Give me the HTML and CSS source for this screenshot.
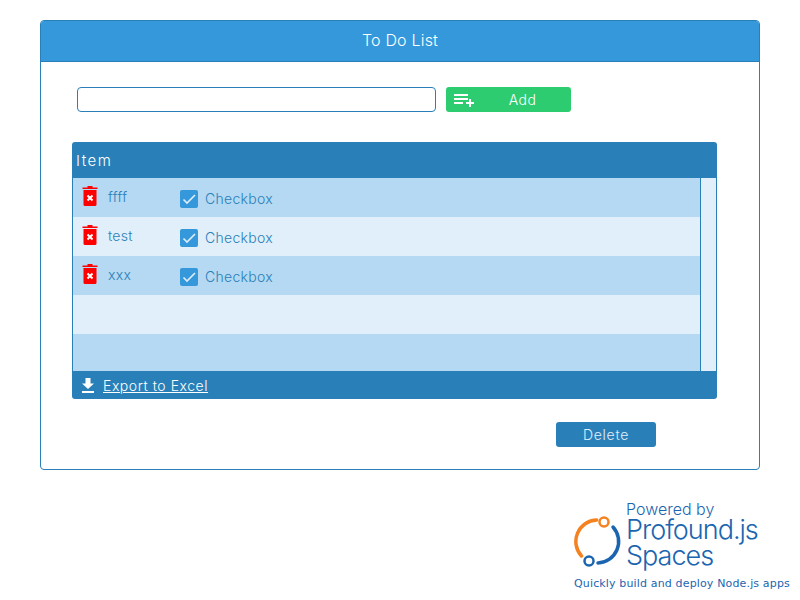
FILE: index.html
```html
<!DOCTYPE html>
<html lang="en">
<head>
<meta charset="utf-8">
<title>To Do List</title>
<link rel="stylesheet" href="styles.css">
</head>
<body>
<main class="panel">
  <header class="panel-head">To Do List</header>
  <div class="add-row">
    <input class="add-input" type="text" aria-label="New item">
    <button class="add-btn" type="button">
      <svg class="add-icon" width="20" height="14" viewBox="0 0 20 14"><path d="M0 1h14v2H0zM0 5h14v2H0zM0 9h9v2H0zM15 6h2v3h3v2h-3v3h-2v-3h-3V9h3z" fill="#fff"/></svg>
      <span class="add-label">Add</span>
    </button>
  </div>
  <section class="grid">
    <div class="grid-head">Item</div>
    <div class="grid-body">
      <div class="rows">
        <div class="row dark">
          <svg class="trash" width="16" height="20" viewBox="0 0 16 20"><path d="M5.500 1.500V0h5v1.500H15.500V3H.5V1.500z" fill="#f00"/><path d="M1.500 4h13v14.500a1.500 1.500 0 0 1-1.500 1.500H3a1.500 1.500 0 0 1-1.500-1.500z" fill="#f00"/><path d="M5.500 9.500l5 5M10.500 9.500l-5 5" stroke="#fff" stroke-width="2" fill="none"/></svg>
          <span class="item">ffff</span>
          <span class="check"><svg width="18" height="18" viewBox="0 0 18 18"><rect width="18" height="18" rx="2" fill="#3498db"/><path d="M3.500 9.500l3.500 3.500L15 5" stroke="#dcecf8" stroke-width="1.700" fill="none"/></svg>Checkbox</span>
        </div>
        <div class="row light">
          <svg class="trash" width="16" height="20" viewBox="0 0 16 20"><path d="M5.500 1.500V0h5v1.500H15.500V3H.5V1.500z" fill="#f00"/><path d="M1.500 4h13v14.500a1.500 1.500 0 0 1-1.500 1.500H3a1.500 1.500 0 0 1-1.500-1.500z" fill="#f00"/><path d="M5.500 9.500l5 5M10.500 9.500l-5 5" stroke="#fff" stroke-width="2" fill="none"/></svg>
          <span class="item">test</span>
          <span class="check"><svg width="18" height="18" viewBox="0 0 18 18"><rect width="18" height="18" rx="2" fill="#3498db"/><path d="M3.500 9.500l3.500 3.500L15 5" stroke="#dcecf8" stroke-width="1.700" fill="none"/></svg>Checkbox</span>
        </div>
        <div class="row dark">
          <svg class="trash" width="16" height="20" viewBox="0 0 16 20"><path d="M5.500 1.500V0h5v1.500H15.500V3H.5V1.500z" fill="#f00"/><path d="M1.500 4h13v14.500a1.500 1.500 0 0 1-1.500 1.500H3a1.500 1.500 0 0 1-1.500-1.500z" fill="#f00"/><path d="M5.500 9.500l5 5M10.500 9.500l-5 5" stroke="#fff" stroke-width="2" fill="none"/></svg>
          <span class="item">xxx</span>
          <span class="check"><svg width="18" height="18" viewBox="0 0 18 18"><rect width="18" height="18" rx="2" fill="#3498db"/><path d="M3.500 9.500l3.500 3.500L15 5" stroke="#dcecf8" stroke-width="1.700" fill="none"/></svg>Checkbox</span>
        </div>
        <div class="row light"></div>
        <div class="row dark"></div>
      </div>
      <div class="scroll"></div>
    </div>
    <div class="grid-foot">
      <svg width="14" height="15" viewBox="0 0 14 15"><path d="M4.500 0h5v5.500H13L7 11 1 5.500h3.500zM1 13h12v2H1z" fill="#fff"/></svg>
      <a class="export" href="#">Export to Excel</a>
    </div>
  </section>
  <div class="actions"><button class="delete-btn" type="button">Delete</button></div>
</main>
<footer class="brand">
  <div class="brand-top">
    <svg class="brand-mark" width="48" height="52" viewBox="0 0 48 52">
      <path d="M22.700 5A21.500 21.500 0 0 0 7.500 41" stroke="#f58220" stroke-width="3.500" fill="none" stroke-linecap="round"/>
      <circle cx="30" cy="7" r="4.500" stroke="#f58220" stroke-width="2.500" fill="none"/>
      <path d="M39 12A21.500 21.500 0 0 1 24 48" stroke="#1b65b0" stroke-width="3.500" fill="none" stroke-linecap="round"/>
      <circle cx="15" cy="46" r="4.500" stroke="#1b65b0" stroke-width="2.500" fill="none"/>
    </svg>
    <div class="brand-text">
      <div class="brand-powered">Powered by</div>
      <div class="brand-name">Profound.js</div>
      <div class="brand-name">Spaces</div>
    </div>
  </div>
  <div class="brand-tag">Quickly build and deploy Node.js apps</div>
</footer>
</body>
</html>
```
FILE: styles.css
```css
* { box-sizing: border-box; }
html, body { margin: 0; padding: 0; }
body {
  width: 800px;
  height: 600px;
  background: #fff;
  padding: 20px 0 0 40px;
  font-family: Inter, "Open Sans", sans-serif;
  font-weight: 300;
  overflow: hidden;
}
.panel {
  width: 720px;
  height: 450px;
  border: 1px solid #2980b9;
  border-radius: 4px;
}
.panel-head {
  height: 41px;
  background: #3498db;
  border-bottom: 1px solid #2980b9;
  border-radius: 3px 3px 0 0;
  color: #fff;
  font-size: 16px;
  letter-spacing: 0.2px;
  line-height: 38px;
  text-align: center;
}
.add-row {
  display: flex;
  gap: 10px;
  padding: 25px 0 0 36px;
}
.add-input {
  width: 359px;
  height: 25px;
  border: 1px solid #2980b9;
  border-radius: 4px;
  background: #fff;
}
.add-btn {
  width: 125px;
  height: 25px;
  padding: 0 0 0 8px;
  display: flex;
  align-items: center;
  border: 0;
  border-radius: 3px;
  background: #2ecc71;
  color: #fff;
  font: inherit;
  font-size: 14px;
  letter-spacing: 0.5px;
}
.add-icon { flex: none; }
.add-label { flex: 1; text-align: center; }
.grid {
  width: 645px;
  margin: 30px 0 0 31px;
}
.grid-head {
  height: 36px;
  padding-left: 4px;
  background: #2980b9;
  border-radius: 3px 3px 0 0;
  color: #fff;
  font-size: 15px;
  letter-spacing: 1.500px;
  line-height: 38px;
}
.grid-body {
  display: flex;
  height: 193px;
  border: solid #2980b9;
  border-width: 0 1px;
  background: #e1effa;
}
.rows { width: 627px; overflow: hidden; }
.row {
  height: 39px;
  display: flex;
  align-items: flex-start;
  color: #2980b9;
  font-size: 14px;
  letter-spacing: 0.3px;
}
.dark { background: #b5d9f2; }
.light { background: #e1effa; }
.trash { margin: 8px 0 0 9px; flex: none; }
.item { width: 72px; margin-left: 10px; line-height: 38px; }
.check {
  display: flex;
  align-items: center;
  gap: 7px;
  height: 39px;
  padding-top: 2px;
}
.scroll {
  width: 16px;
  border-left: 1px solid #2980b9;
}
.grid-foot {
  height: 28px;
  display: flex;
  align-items: center;
  gap: 8px;
  padding-left: 9px;
  background: #2980b9;
  border-radius: 0 0 3px 3px;
}
.export {
  color: #fff;
  font-size: 14px;
  letter-spacing: 0.55px;
}
.actions {
  padding: 23px 0 0 515px;
}
.delete-btn {
  width: 100px;
  height: 25px;
  border: 0;
  border-radius: 3px;
  background: #2980b9;
  color: #e1effa;
  font: inherit;
  font-size: 14px;
  letter-spacing: 0.7px;
}
.brand {
  width: 226px;
  margin: 32px 0 0 534px;
}
.brand-top { display: flex; gap: 4px; }
.brand-mark { flex: none; margin-top: 13px; }
.brand-text { color: #1b65b0; }
.brand-powered { font-size: 16px; line-height: 15px; }
.brand-name { font-size: 27px; line-height: 26px; letter-spacing: -1px; }
.brand-tag {
  margin-top: 8px;
  color: #1b65b0;
  font: 11px/14px "DejaVu Sans", sans-serif;
  letter-spacing: 0.15px;
  white-space: nowrap;
}
```
